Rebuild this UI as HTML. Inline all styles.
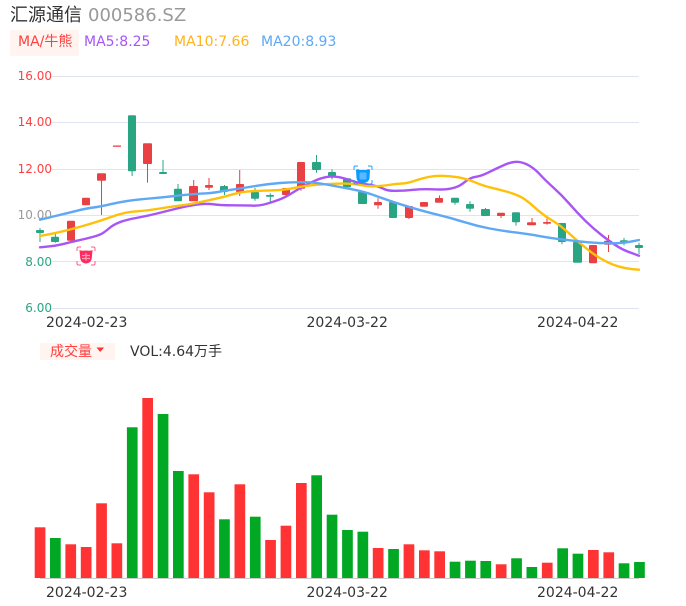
<!DOCTYPE html>
<html><head><meta charset="utf-8">
<style>
html,body{margin:0;padding:0;background:#fff;width:686px;height:606px;overflow:hidden}
svg{display:block}
text{font-family:"DejaVu Sans","WenQuanYi Zen Hei","Noto Sans CJK SC",sans-serif}
</style></head>
<body>
<svg width="686" height="606" viewBox="0 0 686 606" xmlns="http://www.w3.org/2000/svg">
<text x="10" y="21" font-size="18" fill="#333" style="font-family:'DejaVu Sans','Noto Sans CJK SC',sans-serif">汇源通信</text>
<text x="88" y="21" font-size="18" fill="#999">000586.SZ</text>
<rect x="10" y="30" width="69" height="26" fill="#fff4f0"/>
<text x="18" y="46" font-size="14" fill="#ff4040">MA/牛熊</text>
<text x="84" y="46" font-size="14" fill="#a855f7">MA5:8.25</text>
<text x="174" y="46" font-size="14" fill="#ffb31a">MA10:7.66</text>
<text x="261" y="46" font-size="14" fill="#5fa8f5">MA20:8.93</text>

<g stroke="#e0e4f0" stroke-width="1">
<line x1="52" x2="639" y1="76.5" y2="76.5"/>
<line x1="52" x2="639" y1="122.5" y2="122.5"/>
<line x1="52" x2="639" y1="169.5" y2="169.5"/>
<line x1="52" x2="639" y1="215.5" y2="215.5"/>
<line x1="52" x2="639" y1="261.5" y2="261.5"/>
<line x1="52" x2="639" y1="308.5" y2="308.5"/>
</g>
<g font-size="12" text-anchor="end">
<text x="52" y="80" fill="#ff4040">16.00</text>
<text x="52" y="126" fill="#ff4040">14.00</text>
<text x="52" y="173" fill="#ff4040">12.00</text>
<text x="52" y="219" fill="#999">10.00</text>
<text x="52" y="266" fill="#2aa583">8.00</text>
<text x="52" y="312" fill="#2aa583">6.00</text>
</g>

<g fill="#2aa583" stroke="#2aa583" stroke-width="0">
<rect x="36" y="230" width="8" height="3" rx="1"/><rect x="39.5" y="228" width="1" height="14"/>
<rect x="51" y="236.7" width="8" height="5.3" rx="1"/><rect x="54.9" y="234" width="1" height="8.7"/>
<rect x="128" y="115.3" width="8" height="56" rx="1"/><rect x="131.6" y="171" width="1" height="5"/>
<rect x="159" y="172" width="8" height="2" rx="1"/><rect x="162.5" y="160" width="1" height="14"/>
<rect x="174" y="188.7" width="8" height="12.6" rx="1"/><rect x="177.5" y="184" width="1" height="6"/>
<rect x="220" y="186" width="8" height="6" rx="1"/><rect x="224" y="185" width="1" height="10"/>
<rect x="251" y="192" width="8" height="6.7" rx="1"/><rect x="254.5" y="188" width="1" height="12.7"/>
<rect x="266" y="195" width="8" height="1.7" rx="0.8"/><rect x="269.8" y="193.3" width="1" height="8.4"/>
<rect x="312" y="162" width="9" height="8" rx="1"/><rect x="316" y="155" width="1" height="17.7"/>
<rect x="328" y="172" width="8" height="4.7" rx="1"/><rect x="331.5" y="169.3" width="1" height="10"/>
<rect x="343" y="178.3" width="8" height="9" rx="1"/>
<rect x="358" y="191.7" width="9" height="12.3" rx="1"/>
<rect x="389" y="202" width="8" height="16" rx="1"/>
<rect x="451" y="197.7" width="8" height="5" rx="1"/><rect x="454.5" y="202" width="1" height="2.7"/>
<rect x="466" y="204" width="8" height="4.7" rx="1"/><rect x="469.5" y="201.3" width="1" height="10.4"/>
<rect x="481" y="209" width="9" height="7" rx="1"/><rect x="485" y="208" width="1" height="4"/>
<rect x="512" y="212.3" width="8" height="10" rx="1"/><rect x="515.5" y="221" width="1" height="4.7"/>
<rect x="558" y="223" width="8" height="19" rx="1"/><rect x="561.5" y="241" width="1" height="3.3"/>
<rect x="573" y="242" width="9" height="20.7" rx="1"/>
<rect x="620" y="240.3" width="8" height="3" rx="1"/><rect x="623.5" y="238" width="1" height="7.3"/>
<rect x="635" y="245" width="8" height="3" rx="1"/><rect x="638.5" y="242.7" width="1" height="11.3"/>
</g>
<g fill="#e84043">
<rect x="67" y="220.7" width="8" height="20" rx="1"/><rect x="70.5" y="240" width="1" height="3"/>
<rect x="82" y="197.7" width="8" height="7.6" rx="1"/>
<rect x="97" y="173.3" width="9" height="7.4" rx="1"/><rect x="101" y="180" width="1" height="35"/>
<rect x="113" y="145.5" width="8" height="1.3"/>
<rect x="143" y="143.3" width="9" height="20.7" rx="1"/><rect x="147" y="163" width="1" height="19.7"/>
<rect x="189" y="186" width="9" height="15.3" rx="1"/><rect x="193.2" y="180" width="1" height="7"/>
<rect x="205" y="185" width="8" height="2.7" rx="1"/><rect x="208.5" y="178" width="1" height="12"/>
<rect x="236" y="184" width="8" height="8" rx="1"/><rect x="239.2" y="170" width="1" height="26"/>
<rect x="282" y="188" width="8" height="7" rx="1"/><rect x="285.5" y="195" width="1" height="2"/>
<rect x="297" y="162" width="8" height="26.7" rx="1"/><rect x="300.5" y="188" width="1" height="2.7"/>
<rect x="374" y="202" width="8" height="3.3" rx="1"/><rect x="377.5" y="198.3" width="1" height="10.4"/>
<rect x="405" y="206" width="8" height="12" rx="1"/><rect x="408.5" y="217" width="1" height="2"/>
<rect x="420" y="202" width="8" height="4.7" rx="1"/>
<rect x="435" y="198" width="8" height="4.7" rx="1"/><rect x="439" y="195.5" width="1" height="4"/>
<rect x="497" y="212.7" width="8" height="3.3" rx="1"/><rect x="500.5" y="215" width="1" height="3"/>
<rect x="527" y="222.3" width="9" height="3" rx="1"/><rect x="531.5" y="218" width="1" height="6"/>
<rect x="543" y="222" width="8" height="1.7" rx="0.8"/><rect x="546.5" y="216.7" width="1" height="8"/>
<rect x="589" y="245" width="8" height="18.3" rx="1"/>
<rect x="604" y="240.7" width="8" height="4" rx="1"/><rect x="608" y="235" width="1" height="17"/>
</g>

<g fill="none" stroke-width="2.4" stroke-linejoin="round" stroke-linecap="round">
<path stroke="#a855f7" d="M40,247.3 L47.5,246.6 Q55,246 62.5,244.2 Q70,242.3 77.5,240.6 Q85,239 92.5,237 Q100,235 103,233 Q106,231 109.5,228 Q113,225 119,222.5 Q125,220 136,218 Q147,216 157,213.5 Q167,211 177,208.5 Q187,206 197,204.6 Q207,203.3 213.5,204.3 Q220,205.3 232.5,205.3 Q245,205.3 251.5,205.6 Q258,206 264,204.5 Q270,203 277.5,200.3 Q285,197.7 292.5,192.8 Q300,188 310.8,182.6 Q321.7,177.3 329.8,176.6 Q338,176 348,179.5 Q358,183 364.8,184 Q371.7,185 375.8,186 Q380,187 384,189 Q388,191 396.5,190.8 Q405,190.7 413.3,189.8 Q421.7,189 431.7,189.3 Q441.7,189.7 445.8,189.3 Q450,189 455,187.5 Q460,186 465,181.8 Q470,177.7 475.8,176.8 Q481.7,176 489.2,172.1 Q496.7,168.3 504.2,165 Q511.7,161.7 517.3,161.8 Q523,162 529,165.5 Q535,169 540,174.5 Q545,180 553.3,187.5 Q561.7,195 569.2,203.6 Q576.7,212.3 584.8,220.3 Q593,228.3 601.5,235 Q610,241.7 616.5,245.8 Q623,250 631,252.8 L639,255.7"/>
<path stroke="#ffc107" d="M40,236 L53.3,233.4 Q66.7,230.7 83.3,225.9 Q100,221 112.5,216.5 Q125,212 135.8,211.4 Q146.7,210.7 156.7,209 Q166.7,207.3 178.3,205.8 Q190,204.3 198.3,202.5 Q206.7,200.7 215.8,198.7 Q225,196.7 233.3,194.2 Q241.7,191.7 251.7,191.2 Q261.7,190.7 273.3,190.3 Q285,190 295,187.8 Q305,185.7 316.5,184.8 Q328,184 339.8,183.6 Q351.7,183.3 359.8,185 Q368,186.7 374.8,186.3 Q381.7,186 388.3,185 Q395,184 401.5,183.6 Q408,183.3 414.8,180.8 Q421.7,178.3 428.3,177 Q435,175.7 442.5,175.8 Q450,176 458.3,177.3 Q466.7,178.7 474.8,182.2 Q483,185.7 489.8,187.3 Q496.7,189 504.8,191.1 Q513,193.3 519,196 Q525,198.7 534,206.8 Q543,215 551.5,220 Q560,225 569,233.3 Q578,241.7 587.3,249.2 Q596.7,256.7 604.8,260.8 Q613,265 619.8,266.8 Q626.7,268.7 632.8,269.2 L639,269.7"/>
<path stroke="#5fa8f5" d="M40,219.7 L53.3,216.5 Q66.7,213.3 76.7,210.8 Q86.7,208.3 93.3,207.5 Q100,206.7 110,204.3 Q120,202 130,200.6 Q140,199.3 153.3,198.2 Q166.7,197 178.3,195.6 Q190,194.3 201.5,193.6 Q213,193 219,191.8 Q225,190.7 235,189.2 Q245,187.7 256.5,185.8 Q268,184 279.8,183 Q291.7,182 303.3,182.2 Q315,182.3 326.5,184.5 Q338,186.7 351.5,189.2 Q365,191.7 378.3,196.7 Q391.7,201.7 408.3,206.7 Q425,211.7 437.5,214.7 Q450,217.7 463.3,221.8 Q476.7,226 489.8,228.5 Q503,231 516.5,232.6 Q530,234.3 540,236.2 Q550,238 563.3,239.6 Q576.7,241.3 588.3,242.3 Q600,243.3 611.5,243.3 Q623,243.3 631,241.6 L639,240"/>
</g>

<!-- bull icon -->
<g>
<path d="M77 251v-2.500a1.500 1.500 0 0 1 1.500-1.500H81M91 247h2.500a1.500 1.500 0 0 1 1.500 1.500V251M95 261v2.500a1.500 1.500 0 0 1-1.500 1.500H91M81 265h-2.500a1.500 1.500 0 0 1-1.500-1.500V261" fill="none" stroke="#ff5c85" stroke-width="1"/>
<path d="M79.500 250c2 1.200 4 .5 6.500.5s4.500.7 6.500-.5l-.7 8c-.4 3.500-3 5.500-5.800 5.500s-5.400-2-5.800-5.500z" fill="#ff2a60"/>
<path d="M82 255.500h8M82 258.500h8M86 253v7.500" stroke="#ff9db8" stroke-width="1.200" fill="none"/>
</g>
<!-- bear icon -->
<g>
<path d="M354 170v-2.500a1.500 1.500 0 0 1 1.500-1.500H358M368 166h2.500a1.500 1.500 0 0 1 1.500 1.500V170M372 180v2.500a1.500 1.500 0 0 1-1.500 1.500H368M358 184h-2.500a1.500 1.500 0 0 1-1.500-1.500V180" fill="none" stroke="#1aa3ff" stroke-width="1"/>
<path d="M356 170c1.500-1.200 2.500-.8 3.500 0h7c1-.8 2-1.200 3.500 0l-.5 8c-.3 3-2.800 5-6.500 5s-6.200-2-6.500-5z" fill="#0a9bff"/>
<rect x="359.500" y="172.500" width="7" height="7" rx="1" fill="#5db9ff"/>
</g>

<g font-size="14" fill="#333">
<text x="46" y="327">2024-02-23</text>
<text x="306.500" y="327">2024-03-22</text>
<text x="537" y="327">2024-04-22</text>
<text x="46" y="597">2024-02-23</text>
<text x="306.500" y="597">2024-03-22</text>
<text x="537" y="597">2024-04-22</text>
</g>

<rect x="40" y="343" width="75" height="17" fill="#fff4f0"/>
<text x="50" y="356" font-size="14" fill="#ff4040">成交量</text>
<path d="M96.500 347.500h7.500l-3.750 4.500z" fill="#ff3333"/>
<text x="130" y="356" font-size="14" fill="#333">VOL:4.64万手</text>

<line x1="40" x2="639" y1="578.5" y2="578.5" stroke="#ccc" stroke-width="1"/>
<g fill="#ff3333">
<rect x="34.700" y="527.300" width="10.700" height="50.700"/>
<rect x="65.400" y="544.300" width="10.700" height="33.700"/>
<rect x="80.800" y="547" width="10.700" height="31"/>
<rect x="96.200" y="503.300" width="10.700" height="74.700"/>
<rect x="111.500" y="543.300" width="10.700" height="34.700"/>
<rect x="142.300" y="398" width="10.700" height="180"/>
<rect x="188.400" y="474.300" width="10.700" height="103.700"/>
<rect x="203.800" y="492.300" width="10.700" height="85.700"/>
<rect x="234.500" y="484.300" width="10.700" height="93.700"/>
<rect x="265.200" y="540" width="10.700" height="38"/>
<rect x="280.600" y="525.700" width="10.700" height="52.300"/>
<rect x="296" y="483" width="10.700" height="95"/>
<rect x="372.800" y="548" width="10.700" height="30"/>
<rect x="403.600" y="544.300" width="10.700" height="33.700"/>
<rect x="419" y="550.300" width="10.700" height="27.700"/>
<rect x="434.300" y="551.300" width="10.700" height="26.700"/>
<rect x="495.800" y="564.300" width="10.700" height="13.700"/>
<rect x="541.900" y="562.700" width="10.700" height="15.300"/>
<rect x="588" y="550" width="10.700" height="28"/>
<rect x="603.400" y="552.300" width="10.700" height="25.700"/>
</g>
<g fill="#00a823">
<rect x="50" y="538" width="10.700" height="40"/>
<rect x="126.900" y="427.300" width="10.700" height="150.700"/>
<rect x="157.700" y="414" width="10.700" height="164"/>
<rect x="173" y="471" width="10.700" height="107"/>
<rect x="219.100" y="519.300" width="10.700" height="58.700"/>
<rect x="249.900" y="516.700" width="10.700" height="61.300"/>
<rect x="311.300" y="475.300" width="10.700" height="102.700"/>
<rect x="326.700" y="514.700" width="10.700" height="63.300"/>
<rect x="342.100" y="530" width="10.700" height="48"/>
<rect x="357.500" y="531.700" width="10.700" height="46.300"/>
<rect x="388.200" y="549" width="10.700" height="29"/>
<rect x="449.700" y="561.700" width="10.700" height="16.300"/>
<rect x="465.100" y="560.700" width="10.700" height="17.300"/>
<rect x="480.400" y="561" width="10.700" height="17"/>
<rect x="511.200" y="558.300" width="10.700" height="19.700"/>
<rect x="526.500" y="567" width="10.700" height="11"/>
<rect x="557.300" y="548.300" width="10.700" height="29.700"/>
<rect x="572.600" y="553.700" width="10.700" height="24.300"/>
<rect x="618.700" y="563.300" width="10.700" height="14.700"/>
<rect x="634.100" y="562" width="10.700" height="16"/>
</g>
</svg>
</body></html>
